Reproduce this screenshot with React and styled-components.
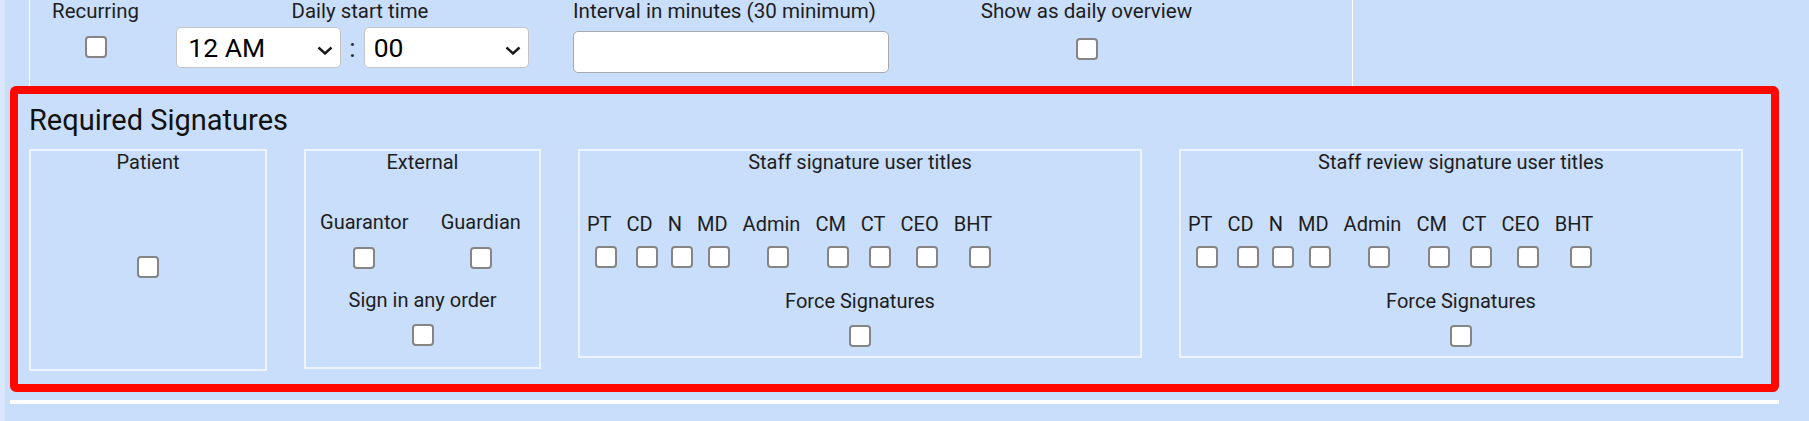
import styled, { createGlobalStyle } from "styled-components";

const GlobalStyle = createGlobalStyle`
  html, body {
    margin: 0;
    padding: 0;
  }
  body {
    background: #c9defb;
    font-family: Roboto, "Liberation Sans", Arial, sans-serif;
    color: #1d1d1d;
  }
`;

const Page = styled.div`
  min-height: 421px;
  background: #c9defb;
  border-left: 5px solid #d8e6fb;
  display: flex;
  flex-direction: column;
`;

const TopPanel = styled.div`
  margin-left: 24px;
  width: 1324px;
  height: 86px;
  box-sizing: border-box;
  border-left: 1px solid #fff;
  border-right: 1px solid #fff;
  padding-left: 23px;
  display: flex;
  align-items: flex-start;
`;

const Field = styled.div`
  width: ${(p) => p.$width}px;
  margin-left: ${(p) => p.$offset || 0}px;
  display: flex;
  flex-direction: column;
  align-items: ${(p) => (p.$left ? "flex-start" : "center")};
`;

const Label = styled.div`
  font-size: ${(p) => p.$size || 20}px;
  line-height: 23px;
  white-space: nowrap;
  margin-left: ${(p) => p.$shift || 0}px;
`;

const Checkbox = styled.input.attrs({ type: "checkbox" })`
  appearance: none;
  -webkit-appearance: none;
  box-sizing: border-box;
  width: 22px;
  height: 22px;
  margin: ${(p) => p.$top || 0}px 0 0;
  border: 2px solid #858585;
  border-radius: 4px;
  background: #fff;
`;

const TimeRow = styled.div`
  margin-top: 4px;
  display: flex;
  align-items: center;
  gap: 8px;
`;

const SelectWrap = styled.div`
  position: relative;
  width: 165px;
  height: 41px;
`;

const Select = styled.select`
  appearance: none;
  -webkit-appearance: none;
  box-sizing: border-box;
  width: 100%;
  height: 100%;
  border: 1px solid #c4c4c4;
  border-radius: 5px;
  background: #fff;
  color: #000;
  font-family: Roboto, "Liberation Sans", Arial, sans-serif;
  font-size: 26.5px;
  padding: 0 0 0 ${(p) => p.$pad}px;
  outline: none;
`;

const Chevron = styled.svg`
  position: absolute;
  right: 8px;
  top: 46%;
  pointer-events: none;
`;

const Colon = styled.span`
  font-size: 26px;
  color: #222;
`;

const TextInput = styled.input`
  box-sizing: border-box;
  width: 316px;
  height: 42px;
  margin-top: 8px;
  border: 1px solid #a9a9a9;
  border-radius: 5px;
  background: #fff;
`;

const Section = styled.section`
  margin-left: 5px;
  width: 1769px;
  box-sizing: border-box;
  border: 8px solid #ff0800;
  border-radius: 6px;
  padding: 9px 11px 13px;
`;

const Heading = styled.h2`
  margin: 0;
  font-size: 29px;
  font-weight: 400;
  line-height: 34px;
  color: #111;
`;

const BoxRow = styled.div`
  margin-top: 12px;
  display: flex;
  align-items: flex-start;
  gap: 37px;
`;

const SubBox = styled.div`
  box-sizing: border-box;
  width: ${(p) => p.$width}px;
  height: ${(p) => p.$height}px;
  border: 2px solid #edf4fe;
  display: flex;
  flex-direction: column;
  align-items: center;
`;

const Pair = styled.div`
  align-self: stretch;
  margin-top: 37px;
  display: flex;
`;

const PairCol = styled.div`
  flex: 1;
  display: flex;
  flex-direction: column;
  align-items: center;
`;

const TitlesRow = styled.div`
  align-self: flex-start;
  margin: 39px 0 0 7px;
  display: flex;
  gap: 15px;
`;

const TitleItem = styled.div`
  display: flex;
  flex-direction: column;
  align-items: center;
`;

const TitleCheck = styled(Checkbox)`
  margin: 10px -18px 0 -4px;
`;

const Divider = styled.div`
  margin: 8px 0 0 5px;
  width: 1769px;
  height: 4px;
  background: #fff;
`;

const TITLES = ["PT", "CD", "N", "MD", "Admin", "CM", "CT", "CEO", "BHT"];

const ChevronIcon = () => (
  <Chevron width="16" height="9" viewBox="0 0 16 9">
    <path d="M1.5 1.5 L8 7.5 L14.5 1.5" fill="none" stroke="#1a1a1a" strokeWidth="2.4" />
  </Chevron>
);

const TimeSelect = ({ value, options, pad }) => (
  <SelectWrap>
    <Select defaultValue={value} $pad={pad}>
      {options.map((o) => (
        <option key={o}>{o}</option>
      ))}
    </Select>
    <ChevronIcon />
  </SelectWrap>
);

const TitlesBox = ({ title }) => (
  <SubBox $width={564} $height={209}>
    <Label>{title}</Label>
    <TitlesRow>
      {TITLES.map((t) => (
        <TitleItem key={t}>
          <Label>{t}</Label>
          <TitleCheck />
        </TitleItem>
      ))}
    </TitlesRow>
    <Label style={{ marginTop: 22 }}>Force Signatures</Label>
    <Checkbox $top={12} />
  </SubBox>
);

export default function App() {
  const hours = ["12 AM", "1 AM", "2 AM", "3 AM", "4 AM", "5 AM", "6 AM"];
  const minutes = ["00", "15", "30", "45"];

  return (
    <>
      <GlobalStyle />
      <Page>
        <TopPanel>
          <Field $width={85}>
            <Label $size={20.4}>Recurring</Label>
            <Checkbox $top={13} />
          </Field>
          <Field $width={353} $offset={38}>
            <Label $size={20.4} $shift={15}>Daily start time</Label>
            <TimeRow>
              <TimeSelect value="12 AM" options={hours} pad={11} />
              <Colon>:</Colon>
              <TimeSelect value="00" options={minutes} pad={9} />
            </TimeRow>
          </Field>
          <Field $width={316} $offset={44} $left>
            <Label $size={20.6}>Interval in minutes (30 minimum)</Label>
            <TextInput type="text" />
          </Field>
          <Field $width={209} $offset={93}>
            <Label $size={20.6}>Show as daily overview</Label>
            <Checkbox $top={15} />
          </Field>
        </TopPanel>

        <Section>
          <Heading>Required Signatures</Heading>
          <BoxRow>
            <SubBox $width={238} $height={222}>
              <Label>Patient</Label>
              <Checkbox $top={82} />
            </SubBox>
            <SubBox $width={237} $height={220}>
              <Label>External</Label>
              <Pair>
                <PairCol>
                  <Label>Guarantor</Label>
                  <Checkbox $top={13} />
                </PairCol>
                <PairCol>
                  <Label>Guardian</Label>
                  <Checkbox $top={13} />
                </PairCol>
              </Pair>
              <Label style={{ marginTop: 20 }}>Sign in any order</Label>
              <Checkbox $top={12} />
            </SubBox>
            <TitlesBox title="Staff signature user titles" />
            <TitlesBox title="Staff review signature user titles" />
          </BoxRow>
        </Section>
        <Divider />
      </Page>
    </>
  );
}
